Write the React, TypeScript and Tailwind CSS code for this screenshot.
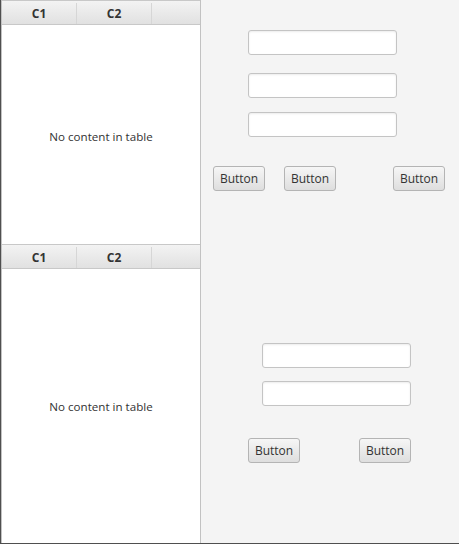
import React from "react";

const font = { fontFamily: '"Open Sans", "Noto Sans", sans-serif' };

function Field({ className = "" }: { className?: string }) {
  return (
    <div
      className={`h-[25px] w-[149px] rounded-[3px] border border-[#c4c4c4] bg-white shadow-[inset_0_1px_2px_rgba(0,0,0,0.08)] ${className}`}
    />
  );
}

function Btn({ className = "" }: { className?: string }) {
  return (
    <div
      className={`flex h-[25px] w-[52px] items-center justify-center rounded-[3px] border border-[#b4b4b4] bg-gradient-to-b from-[#f6f6f6] to-[#dedede] text-[12px] leading-none text-[#333] ${className}`}
    >
      Button
    </div>
  );
}

function Table({ className = "", bodyPad = "" }: { className?: string; bodyPad?: string }) {
  return (
    <div className={`flex flex-col bg-white ${className}`}>
      <div className="flex h-[25px] shrink-0 border-y border-[#c8c8c8] bg-gradient-to-b from-[#f3f3f3] to-[#e1e1e1] pt-[2px] text-[12px] font-bold text-[#333]">
        <div className="flex w-[75px] items-center justify-center border-r border-[#d6d6d6]">C1</div>
        <div className="flex w-[75px] items-center justify-center border-r border-[#d6d6d6]">C2</div>
        <div className="flex-1" />
      </div>
      <div className={`flex flex-1 items-center justify-center text-[11.6px] text-[#333] ${bodyPad}`}>
        No content in table
      </div>
    </div>
  );
}

export default function App() {
  return (
    <div
      style={font}
      className="flex h-[544px] w-[459px] border-b border-l border-[#4f4f4f] bg-[#f4f4f4]"
    >
      <div className="flex w-[200px] shrink-0 flex-col border-x border-[#c2c2c2]">
        <Table className="h-[244px]" bodyPad="pt-[5px]" />
        <Table className="flex-1" bodyPad="pt-[1px]" />
      </div>
      <div className="flex flex-1 flex-col">
        <div className="ml-[47px] mt-[30px] flex flex-col">
          <Field />
          <Field className="mt-[18px]" />
          <Field className="mt-[14px]" />
        </div>
        <div className="ml-[12px] mt-[29px] flex">
          <Btn />
          <Btn className="ml-[19px]" />
          <Btn className="ml-[57px]" />
        </div>
        <div className="ml-[61px] mt-[152px] flex flex-col">
          <Field />
          <Field className="mt-[13px]" />
        </div>
        <div className="ml-[47px] mt-[32px] flex">
          <Btn />
          <Btn className="ml-[59px]" />
        </div>
      </div>
    </div>
  );
}
